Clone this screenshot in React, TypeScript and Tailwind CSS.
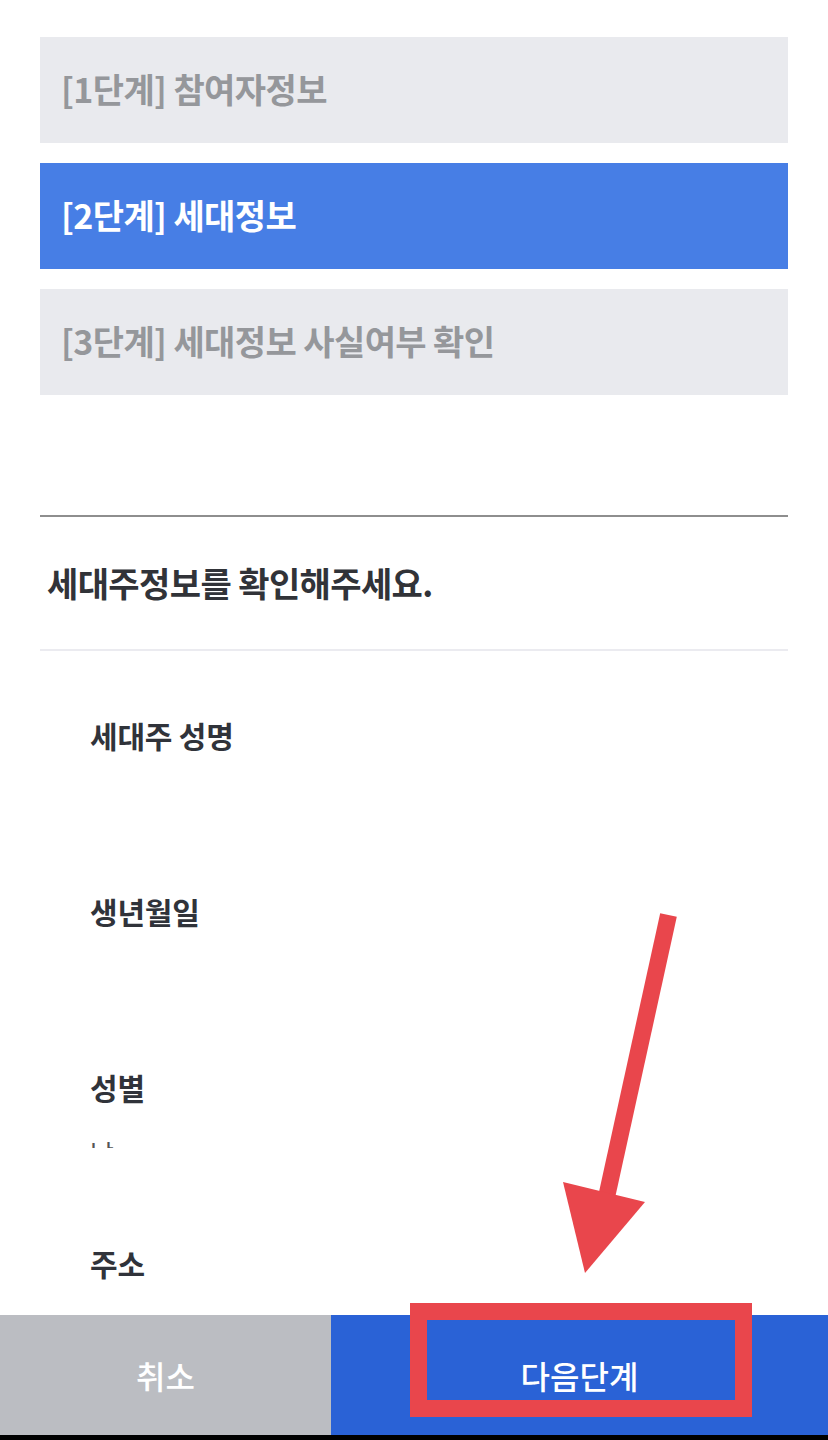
import React from "react";

const font = { fontFamily: '"Noto Sans CJK KR", "Noto Sans", sans-serif' };

function Step({ text, active }: { text: string; active?: boolean }) {
  return (
    <div
      className={`h-[106px] flex items-center pl-[21px] pb-[4px] text-[34px] font-bold tracking-[-0.6px] ${
        active ? "bg-[#477ee5] text-white" : "bg-[#e9eaee] text-[#95979b]"
      }`}
    >
      {text}
    </div>
  );
}

function Field({ label, children }: { label: string; children?: React.ReactNode }) {
  return (
    <div className="h-[176px] pl-[50px]">
      <div className="h-[36px] leading-[36px] text-[30px] font-bold text-[#30333a] tracking-[-0.2px]">{label}</div>
      {children}
    </div>
  );
}

export default function App() {
  return (
    <div className="relative w-[828px] h-[1440px] bg-white flex flex-col overflow-hidden" style={font}>
      <div className="flex-1 overflow-hidden px-[40px] pt-[37px]">
        <div className="flex flex-col gap-[20px]">
          <Step text="[1단계] 참여자정보" />
          <Step text="[2단계] 세대정보" active />
          <Step text="[3단계] 세대정보 사실여부 확인" />
        </div>
        <div className="mt-[120px] border-t-2 border-[#8e8e8e]" />
        <div className="mt-[46px] pl-[7px] h-[40px] leading-[40px] text-[34px] font-bold text-[#313338] tracking-[-0.6px]">
          세대주정보를 확인해주세요.
        </div>
        <div className="mt-[46px] border-t-2 border-[#ebebf0]" />
        <div className="pt-[66px]">
          <Field label="세대주 성명" />
          <Field label="생년월일" />
          <Field label="성별">
            <div className="mt-[36px] h-[7px] overflow-hidden">
              <div className="text-[26px] leading-[26px] text-[#555] -mt-[1px]">남</div>
            </div>
          </Field>
          <Field label="주소" />
        </div>
      </div>
      <div className="h-[120px] flex shrink-0">
        <div className="w-[331px] bg-[#bbbdc2] flex items-center justify-center text-white text-[32px] font-medium">
          취소
        </div>
        <div className="flex-1 bg-[#2a62d6] flex items-center justify-center text-white text-[32px] font-medium">
          다음단계
        </div>
      </div>
      <div className="h-[5px] bg-black shrink-0" />

      {/* annotation overlay */}
      <div className="absolute left-[410px] top-[1303px] w-[342px] h-[114px] border-[17px] border-[#e9464c] pointer-events-none" />
      <svg className="absolute left-0 top-0 pointer-events-none" width="828" height="1440">
        <line x1="668.5" y1="915" x2="607" y2="1195" stroke="#e9464c" strokeWidth="17" />
        <polygon points="563,1182 645,1202 585,1273" fill="#e9464c" />
      </svg>
    </div>
  );
}
